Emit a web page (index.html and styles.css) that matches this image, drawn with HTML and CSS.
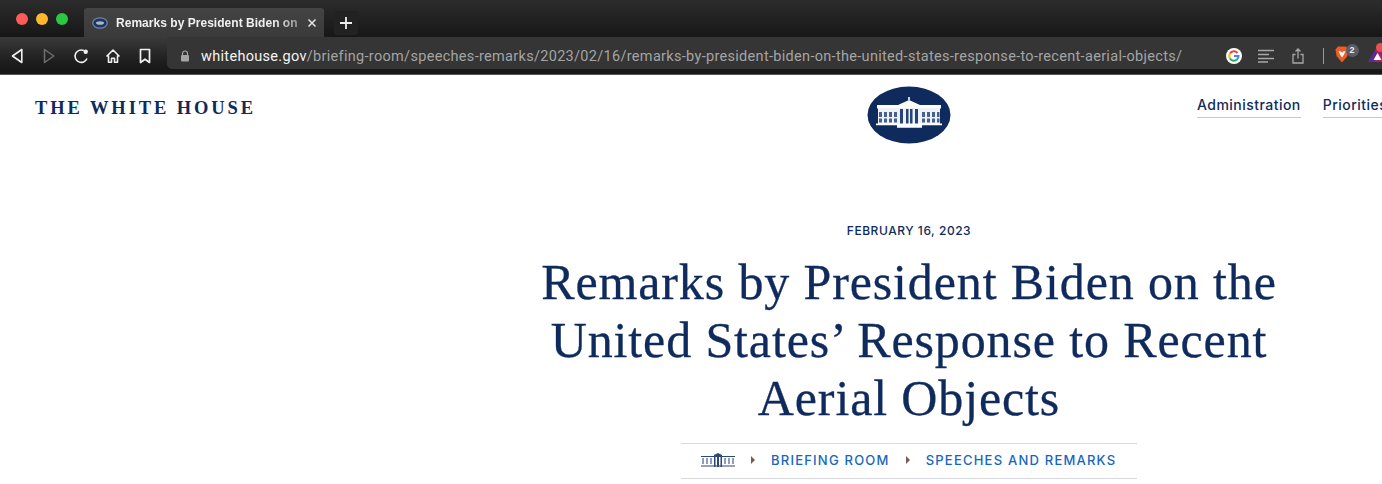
FILE: index.html
```html
<!DOCTYPE html>
<html lang="en">
<head>
<meta charset="utf-8">
<title>Remarks by President Biden</title>
<link rel="stylesheet" href="styles.css">
</head>
<body>
<div class="browser">
  <div class="tabstrip">
    <div class="lights"><i class="light red"></i><i class="light yellow"></i><i class="light green"></i></div>
    <div class="tab">
      <svg class="favicon" width="16" height="12" viewBox="0 0 16 12"><ellipse cx="8" cy="6" rx="7.300" ry="5.200" fill="#1c3566" stroke="#75869f" stroke-width="1.200"/><ellipse cx="8" cy="6" rx="4" ry="1.800" fill="#a9b6c9"/></svg>
      <span class="tab-title">Remarks by President Biden on</span>
      <svg class="tab-close" width="10" height="10" viewBox="0 0 10 10"><path d="M1.500 1.500l7 7M8.500 1.500l-7 7" stroke="#e6e6e6" stroke-width="1.500"/></svg>
    </div>
    <div class="newtab"><svg width="14" height="14" viewBox="0 0 14 14"><path d="M7 1v12M1 7h12" stroke="#eee" stroke-width="1.800"/></svg></div>
  </div>
  <div class="toolbar">
    <div class="navs">
      <svg width="16" height="16" viewBox="0 0 16 16"><path d="M12.800 1.500v13L3.500 8z" fill="none" stroke="#f0f0f0" stroke-width="1.600" stroke-linejoin="round"/></svg>
      <svg width="16" height="16" viewBox="0 0 16 16"><path d="M3.500 1.500v13L12.800 8z" fill="none" stroke="#6f6f6f" stroke-width="1.500" stroke-linejoin="round"/></svg>
      <svg width="16" height="16" viewBox="0 0 16 16"><path d="M14 10.500A6.200 6.200 0 1 1 10.800 2.500" fill="none" stroke="#f0f0f0" stroke-width="1.600"/><circle cx="12.700" cy="3.700" r="2.200" fill="#f0f0f0"/></svg>
      <svg width="16" height="16" viewBox="0 0 16 16"><path d="M1.500 8.500L8 2l6.500 6.500M3.500 7.500v6.800h3v-4h3v4h3V7.500" fill="none" stroke="#f0f0f0" stroke-width="1.600" stroke-linejoin="round"/></svg>
      <svg width="16" height="16" viewBox="0 0 16 16"><path d="M3.500 1.500h9v13L8 11.200l-4.500 3.300z" fill="none" stroke="#f0f0f0" stroke-width="1.700" stroke-linejoin="round"/></svg>
    </div>
    <div class="omnibox">
      <svg class="lock" width="10" height="12" viewBox="0 0 10 12"><path d="M2.500 5V3.500a2.500 2.500 0 0 1 5 0V5" fill="none" stroke="#a5a5a8" stroke-width="1.200"/><rect x="1" y="5" width="8" height="6.500" rx="1" fill="#a5a5a8"/></svg>
      <span class="url"><span class="host">whitehouse.gov</span>/briefing-room/speeches-remarks/2023/02/16/remarks-by-president-biden-on-the-united-states-response-to-recent-aerial-objects/</span>
      <div class="tools">
        <svg width="16" height="16" viewBox="0 0 16 16"><circle cx="8" cy="8" r="8" fill="#fff"/><path d="M11.500 5A4.600 4.600 0 0 0 4 5.500" fill="none" stroke="#ea4335" stroke-width="2"/><path d="M4 5.500a4.600 4.600 0 0 0 0 5" fill="none" stroke="#fbbc05" stroke-width="2"/><path d="M4 10.500a4.600 4.600 0 0 0 7 1" fill="none" stroke="#34a853" stroke-width="2"/><path d="M8 8h4.500a4.600 4.600 0 0 1-1.500 3.500" fill="none" stroke="#4285f4" stroke-width="2"/></svg>
        <svg width="16" height="14" viewBox="0 0 16 14"><path d="M0 1.500h16M0 5.500h11M0 9.500h16M0 13h10" stroke="#a8a8a8" stroke-width="1.600"/></svg>
        <svg class="share" width="12" height="16" viewBox="0 0 12 16"><path d="M3.500 6.500H1v8.500h10V6.500H8.500M6 10.500V1.500M3.500 3.500L6 1l2.500 2.500" fill="none" stroke="#a8a8a8" stroke-width="1.300"/></svg>
      </div>
      <div class="sep"></div>
      <div class="ext">
        <svg width="14" height="17" viewBox="0 0 14 17"><path d="M3 .5h8l2.500 3-1 6.500L7 16.500 1.500 10 .5 3.500z" fill="#ef5a26"/><path d="M3.500 5l2.500.5 1 1.500 1-1.500 2.500-.5-1.500 3.500-2 3-2-3z" fill="#fff"/></svg>
        <span class="badge">2</span>
        <svg class="bat" width="19" height="16" viewBox="0 0 19 16"><path d="M9.500 0L19 16H0z" fill="#a3206a"/><path d="M0 16L7 4l2 4-3 8z" fill="#5a2a90"/><path d="M9.500 7l4 7h-8z" fill="#fff"/></svg>
        <i class="bat-dot"></i>
      </div>
    </div>
  </div>
</div>
<div class="page">
  <header class="site-header">
    <a class="wordmark">THE WHITE HOUSE</a>
    <svg class="seal" width="84" height="58" viewBox="0 0 84 58">
      <ellipse cx="42" cy="29" rx="41.500" ry="28.500" fill="#0f2a5c"/>
      <path d="M10 19h21l11-5 11 5h21v3.500H10z" fill="#fff"/>
      <path d="M41.200 11h1.600v3h-1.600z" fill="#fff"/>
      <path d="M11 22h62v16H11z" fill="#eef1f6"/>
      <path d="M12 26h3v5h-3zM17 26h3v5h-3zM22 26h3v5h-3zM27 26h3v5h-3zM55 26h3v5h-3zM60 26h3v5h-3zM65 26h3v5h-3zM70 26h2.500v5H70zM12 32.500h3v4h-3zM17 32.500h3v4h-3zM22 32.500h3v4h-3zM27 32.500h3v4h-3zM55 32.500h3v4h-3zM60 32.500h3v4h-3zM65 32.500h3v4h-3zM70 32.500h2.500v4H70z" fill="#46618f"/>
      <path d="M33 23h3v15h-3zM39 23h2.500v15H39zM43 23h2.500v15H43zM48 23h3v15h-3z" fill="#25447a"/>
      <path d="M9 37.500h66v1.800H9zM30 39.300h25v2.500H30z" fill="#fff"/>
    </svg>
    <nav class="mainnav">
      <a class="navlink">Administration</a>
      <a class="navlink">Priorities</a>
    </nav>
  </header>
  <main class="article">
    <div class="date">FEBRUARY 16, 2023</div>
    <h1 class="title">Remarks by President Biden on the United States’ Response to Recent Aerial Objects</h1>
    <div class="crumbs">
      <svg class="crumb-home" width="34" height="16" viewBox="0 0 34 16">
        <path d="M0 4.500h34M0 14h34" stroke="#2d4778" stroke-width="1.200"/>
        <path d="M1 6h2v6H1zM5 6h2v6H5zM9 6h2v6H9zM23 6h2v6h-2zM27 6h2v6h-2zM31 6h2v6h-2z" fill="#8f9db8"/>
        <path d="M13 3l4-2 4 2v12h-1.500V4.500h-1.500V15h-2V4.500h-1.500V15H13z" fill="#2d4778"/>
      </svg>
      <i class="arrow"></i>
      <a class="crumb">BRIEFING ROOM</a>
      <i class="arrow"></i>
      <a class="crumb">SPEECHES AND REMARKS</a>
    </div>
  </main>
</div>
</body>
</html>
```
FILE: styles.css
```css
* { box-sizing: border-box; }
html, body { margin: 0; padding: 0; height: 484px; overflow: hidden; background: #fff; }
body { font-family: "Liberation Sans", Arial, sans-serif; }
.browser { height: 75px; display: flex; flex-direction: column; }
.tabstrip { height: 37px; background: linear-gradient(#2c2c2c, #171717); display: flex; align-items: flex-end; }
.lights { display: flex; gap: 8px; width: 84px; padding: 0 0 12px 16px; }
.light { width: 12px; height: 12px; border-radius: 50%; }
.red { background: #fc5b57; }
.yellow { background: #fdb82e; }
.green { background: #29c840; }
.tab { width: 240px; height: 29px; background: linear-gradient(#444, #3a3a3a); border-radius: 3px 3px 0 0; display: flex; align-items: center; padding: 1px 7px 0 8px; color: #f0f0f0; font-size: 12px; font-weight: 700; }
.favicon { flex: none; margin-right: 8px; }
.tab-title { flex: 1; white-space: nowrap; letter-spacing: .03px; -webkit-mask-image: linear-gradient(90deg, #000 84%, rgba(0,0,0,.35)); mask-image: linear-gradient(90deg, #000 84%, rgba(0,0,0,.35)); }
.tab-close { flex: none; margin-left: 3px; }
.newtab { width: 24px; height: 24px; margin: 0 0 2px 10px; background: #222; border-radius: 3px; display: flex; align-items: center; justify-content: center; }
.toolbar { height: 38px; background: linear-gradient(#3a3a3a, #1c1c1c 70%, #161616); display: flex; align-items: flex-start; border-bottom: 1px solid #555; }
.navs { width: 167px; height: 37px; display: flex; align-items: center; gap: 16px; padding: 1px 0 0 9px; flex: none; }
.omnibox { flex: 1; height: 32px; background: #353535; border-radius: 0 0 0 5px; display: flex; align-items: center; padding: 6px 0 0 13px; min-width: 0; }
.lock { flex: none; margin-right: 11px; }
.url { color: #a4a4a4; font-family: Roboto, "Liberation Sans", sans-serif; font-size: 14.500px; white-space: nowrap; flex: 1; letter-spacing: .31px; }
.host { color: #f4f4f4; }
.tools { display: flex; align-items: center; gap: 16px; flex: none; }
.share { margin-left: 2px; }
.sep { width: 1px; height: 16px; background: #999; margin-left: 19px; flex: none; }
.ext { position: relative; width: 58px; height: 20px; padding-left: 11px; flex: none; }
.badge { position: absolute; left: 21.500px; top: -2px; width: 13px; height: 13px; border-radius: 50%; background: #5a5d68; color: #eee; font-size: 9px; font-weight: 700; text-align: center; line-height: 13px; }
.bat { position: absolute; left: 44px; top: 0; }
.bat-dot { position: absolute; left: 52px; top: -3px; width: 9px; height: 9px; border-radius: 50%; background: #ef4e4e; }
.site-header { position: relative; height: 70px; display: flex; align-items: flex-start; padding: 0 0 0 35px; overflow: hidden; }
.wordmark { font-family: "Liberation Serif", serif; font-weight: 700; font-size: 18.500px; letter-spacing: 2.900px; color: #0f2a5c; margin-top: 23px; white-space: nowrap; }
.seal { position: absolute; left: 867px; top: 11px; }
.mainnav { position: absolute; left: 1197px; top: 21px; display: flex; gap: 22px; white-space: nowrap; }
.navlink { font-family: Inter, "Liberation Sans", sans-serif; font-size: 14px; font-weight: 500; color: #0f2a5c; padding-bottom: 4px; border-bottom: 1px solid #c0c8de; letter-spacing: .47px; line-height: 17px; }
.article { width: 800px; margin: 0 0 0 509px; display: flex; flex-direction: column; align-items: center; }
.date { margin-top: 80px; font-family: Inter, "Liberation Sans", sans-serif; font-size: 12px; font-weight: 500; letter-spacing: .55px; color: #0f2a5c; line-height: 12px; }
.title { margin: 16px 0 0; font-family: "Liberation Serif", serif; font-weight: 400; font-size: 50px; line-height: 58px; letter-spacing: .87px; -webkit-text-stroke: .3px #0f2a5c; color: #0f2a5c; text-align: center; width: 780px; }
.crumbs { margin-top: 16px; width: 456px; height: 36px; border-top: 1px solid #d8d8e2; border-bottom: 1px solid #d8d8e2; display: flex; align-items: center; padding: 0 0 2px 20px; }
.crumb-home { flex: none; }
.arrow { width: 0; height: 0; margin: 0 16px; border-left: 4px solid #7a5c50; border-top: 4px solid transparent; border-bottom: 4px solid transparent; flex: none; }
.crumb { font-family: Inter, "Liberation Sans", sans-serif; font-size: 13px; font-weight: 500; letter-spacing: 1.220px; color: #1567bd; white-space: nowrap; }
```
